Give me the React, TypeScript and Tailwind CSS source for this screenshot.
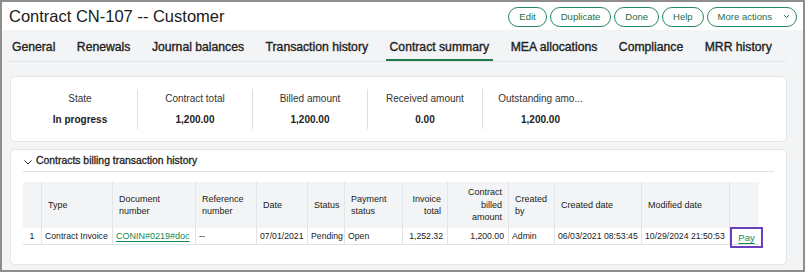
import React from "react";

const cols: { label: React.ReactNode; w: number; align?: "right" | "left" }[] = [
  { label: "", w: 19 },
  { label: "Type", w: 71 },
  { label: <>Document<br />number</>, w: 83 },
  { label: <>Reference<br />number</>, w: 61 },
  { label: "Date", w: 51 },
  { label: "Status", w: 37 },
  { label: <>Payment<br />status</>, w: 58 },
  { label: <>Invoice<br />total</>, w: 45, align: "right" },
  { label: <>Contract<br />billed<br />amount</>, w: 61, align: "right" },
  { label: <>Created<br />by</>, w: 46 },
  { label: "Created date", w: 87 },
  { label: "Modified date", w: 88 },
  { label: "", w: 29 },
];

const Btn = ({ children }: { children: React.ReactNode }) => (
  <button className="h-[20px] rounded-full border-[1.5px] border-[#23895a] px-[10px] text-[9.5px] leading-none text-[#1f6d45] bg-white flex items-center">
    {children}
  </button>
);

const row: [string, string][] = [
  ["1", "center"],
  ["Contract Invoice", "left"],
  ["CONIN#0219#doc", "link"],
  ["--", "left"],
  ["07/01/2021", "left"],
  ["Pending", "left"],
  ["Open", "left"],
  ["1,252.32", "right"],
  ["1,200.00", "right"],
  ["Admin", "left"],
  ["06/03/2021 08:53:45", "left"],
  ["10/29/2024 21:50:53", "left"],
];

export default function App() {
  const tabs = [
    "General",
    "Renewals",
    "Journal balances",
    "Transaction history",
    "Contract summary",
    "MEA allocations",
    "Compliance",
    "MRR history",
  ];
  const summary = [
    ["State", "In progress"],
    ["Contract total", "1,200.00"],
    ["Billed amount", "1,200.00"],
    ["Received amount", "0.00"],
    ["Outstanding amo...", "1,200.00"],
  ];
  return (
    <div
      className="w-[805px] h-[272px] bg-[#8e8e8e] p-[2px]"
      style={{ fontFamily: '"Liberation Sans", Arial, sans-serif' }}
    >
      <div className="w-full h-full bg-[#f2f4f5] flex flex-col overflow-hidden">
        {/* Header */}
        <div className="h-[28px] bg-white flex items-center justify-between pl-[7px] pr-[6px] shrink-0">
          <div className="text-[16.5px] text-[#1b1b1b] leading-none">Contract CN-107 -- Customer</div>
          <div className="flex items-center gap-[3px] pt-[1px]">
            <Btn>Edit</Btn>
            <Btn>Duplicate</Btn>
            <Btn>Done</Btn>
            <Btn>Help</Btn>
            <button className="h-[20px] rounded-full border-[1.5px] border-[#23895a] pl-[10px] pr-[6px] text-[9.5px] leading-none text-[#1f6d45] bg-white flex items-center gap-[11px]">
              More actions
              <svg width="7" height="5" viewBox="0 0 7 5" fill="none">
                <path d="M1 1.2l2.5 2.3L6 1.2" stroke="#1f6d45" strokeWidth="1" />
              </svg>
            </button>
          </div>
        </div>

        {/* Tabs */}
        <div className="ml-[6px] mr-[17px] h-[32px] border-b border-[#e1e4e6] flex items-end gap-[13.5px] shrink-0">
          {tabs.map((t) => {
            const active = t === "Contract summary";
            return (
              <div
                key={t}
                className={`px-[4px] h-[20px] text-[12.2px] whitespace-nowrap text-[#222] leading-none flex items-start [-webkit-text-stroke:0.35px_#222] ${
                  active ? "border-b-2 border-[#1c7a4a]" : ""
                }`}
              >
                {t}
              </div>
            );
          })}
        </div>

        {/* Summary card */}
        <div className="mt-[14px] ml-[8px] mr-[16px] h-[66px] bg-white border border-[#e3e6e8] rounded-[5px] flex items-center pl-[12px] shrink-0">
          {summary.map(([l, v], i) => (
            <div
              key={l}
              className={`w-[115px] h-[40px] flex flex-col items-center justify-center gap-[11px] ${
                i < 4 ? "border-r border-[#dcdfe1]" : ""
              }`}
            >
              <div className="text-[10px] text-[#333] leading-none whitespace-nowrap">{l}</div>
              <div className="text-[10px] font-bold text-[#222] leading-none">{v}</div>
            </div>
          ))}
        </div>

        {/* Billing card */}
        <div className="mt-[7px] ml-[8px] mr-[16px] h-[116px] bg-white border border-[#e3e6e8] rounded-[5px] pl-[12px] pr-[12px] shrink-0">
          <div className="h-[22px] border-b border-[#dfe2e4] flex items-end pb-[5px] gap-[3px]">
            <svg width="10" height="8" viewBox="0 0 10 8" fill="none">
              <path d="M1.5 2.5l3.5 3.5 3.5-3.5" stroke="#333" strokeWidth="1" />
            </svg>
            <span className="text-[10.4px] text-[#222] leading-none [-webkit-text-stroke:0.3px_#222]">
              Contracts billing transaction history
            </span>
          </div>
          <div className="mt-[10px] flex flex-col w-[736px]">
            <div className="flex h-[46px] bg-[#f2f4f5]">
              {cols.map((c, i) => (
                <div
                  key={i}
                  style={{ width: c.w }}
                  className={`shrink-0 border-r border-[#e2e5e7] last:border-r-0 flex items-center px-[6px] text-[9px] leading-[12.5px] text-[#222] ${
                    c.align === "right" ? "justify-end text-right" : ""
                  }`}
                >
                  <div>{c.label}</div>
                </div>
              ))}
            </div>
            <div className="flex h-[17px] border-b border-[#dfe2e4] text-[8.7px] text-[#222] leading-none">
              {row.map(([v, a], i) => (
                <div
                  key={i}
                  style={{ width: cols[i].w }}
                  className={`shrink-0 border-r border-[#e2e5e7] flex items-center whitespace-nowrap ${
                    a === "center" ? "justify-center" : a === "right" ? "justify-end px-[4px]" : "px-[3px]"
                  }`}
                >
                  {a === "link" ? (
                    <span className="text-[9px] text-[#138a4f] underline underline-offset-[2px]">{v}</span>
                  ) : (
                    v
                  )}
                </div>
              ))}
              <div className="relative shrink-0 w-[29px]">
                <div className="absolute left-0 top-[-1px] w-[33px] h-[21px] border-2 border-[#6a3fc0] flex items-center justify-center">
                  <span className="text-[9.5px] text-[#138a4f] underline underline-offset-[2px]">Pay</span>
                </div>
              </div>
            </div>
          </div>
        </div>
      </div>
    </div>
  );
}
